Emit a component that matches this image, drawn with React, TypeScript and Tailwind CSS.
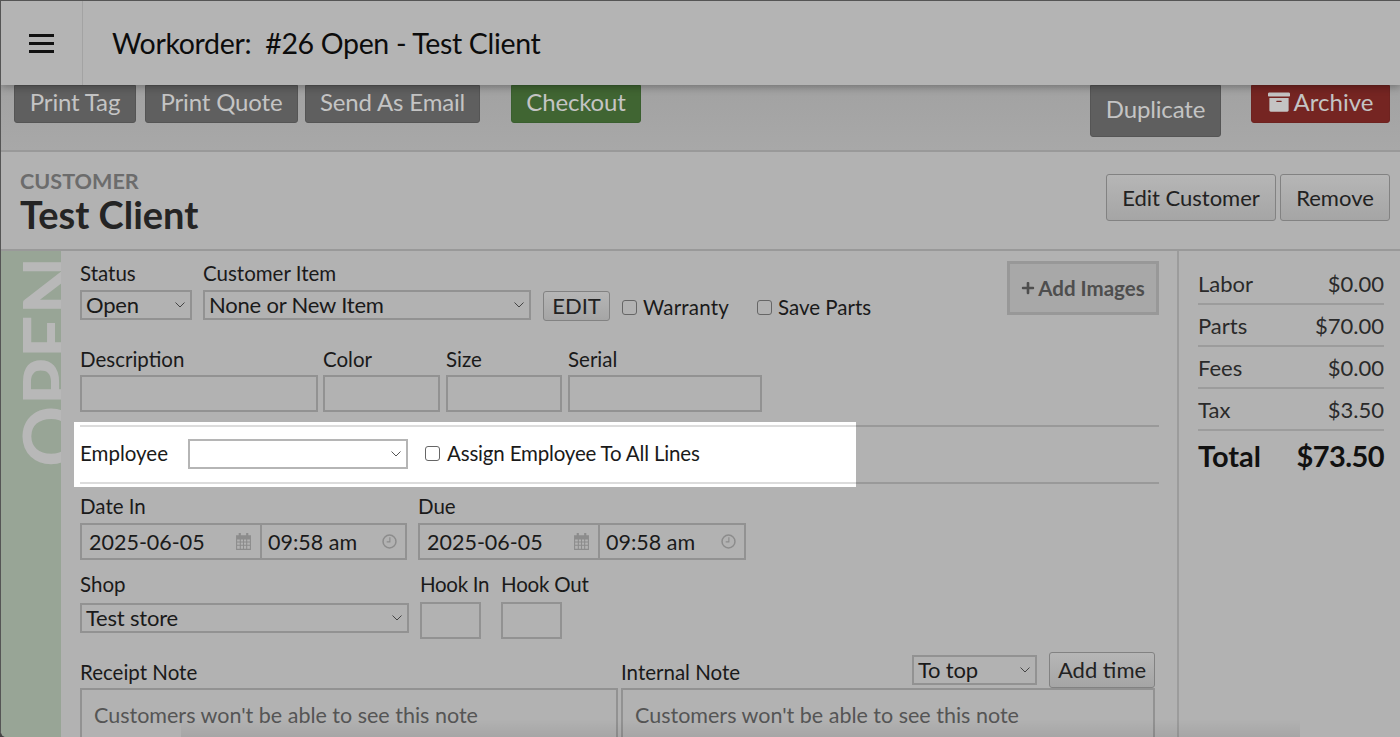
import { FaArchive, FaPlus } from "react-icons/fa";
import type { ReactNode } from "react";

function Chevron({ className }: { className: string }) {
  return (
    <svg viewBox="0 0 10 6" className={`h-[6px] w-[10px] ${className}`} fill="none" stroke="currentColor" strokeWidth="1">
      <path d="M.5.5 5 5 9.5.5" />
    </svg>
  );
}

function Sel({ value, className, white }: { value?: string; className: string; white?: boolean }) {
  return (
    <div
      className={`flex items-center justify-between border-2 pl-[4px] pr-[5px] text-[22px] leading-none tracking-[-0.2px] text-[#1a1a1a] ${
        white ? "border-[#b5b5b5] bg-white" : "border-[#929292]"
      } ${className}`}
    >
      <span>{value}</span>
      <Chevron className={white ? "text-[#555]" : "text-[#444]"} />
    </div>
  );
}

function DarkBtn({ children, className }: { children: ReactNode; className: string }) {
  return (
    <div
      className={`flex items-end justify-center rounded-b-[3px] border text-[24px] leading-none tracking-[-0.15px] text-[#c4c4c4] ${className}`}
    >
      {children}
    </div>
  );
}

function LightBtn({ children, className }: { children: ReactNode; className: string }) {
  return (
    <div
      className={`flex items-center justify-center rounded-[3px] border border-[#828282] bg-gradient-to-b from-[#b6b6b6] to-[#a5a5a5] text-[#222] ${className}`}
    >
      {children}
    </div>
  );
}

function Field({ className }: { className: string }) {
  return <div className={`border-2 border-[#929292] ${className}`} />;
}

function CalendarIcon() {
  return (
    <svg viewBox="0 0 16 16" className="h-[17px] w-[17px] text-[#8c8c8c]" fill="currentColor">
      <rect x="3.5" y="0" width="2" height="3.5" />
      <rect x="10.5" y="0" width="2" height="3.5" />
      <path d="M1 2h14v14H1zM2 6v2h2.5V6zm3.5 0v2h2V6zm3 0v2h2V6zm3 0v2H14V6zM2 9v2h2.5V9zm3.5 0v2h2V9zm3 0v2h2V9zm3 0v2H14V9zM2 12v2.9h2.5V12zm3.5 0v2.9h2V12zm3 0v2.9h2V12zm3 0v2.9H14V12z" fillRule="evenodd" />
    </svg>
  );
}

function ClockIcon() {
  return (
    <svg viewBox="0 0 16 16" className="h-[15px] w-[15px] text-[#8c8c8c]" fill="none" stroke="currentColor" strokeWidth="1.6">
      <circle cx="8" cy="8" r="6.9" />
      <path d="M8.4 3.5V8.4H5" strokeWidth="1.2" />
    </svg>
  );
}

function DateTime({ className }: { className: string }) {
  return (
    <div className={`flex h-[37px] border-2 border-[#929292] text-[21.5px] text-[#1a1a1a] ${className}`}>
      <div className="flex w-[180px] items-center justify-between border-r-2 border-[#929292] pl-[7px] pr-[8px]">
        <span className="pt-[2px]">2025-06-05</span>
        <CalendarIcon />
      </div>
      <div className="flex flex-1 items-center justify-between pl-[6px] pr-[8px]">
        <span className="pt-[2px]">09:58 am</span>
        <ClockIcon />
      </div>
    </div>
  );
}

function Check({ className }: { className?: string }) {
  return <div className={`h-[15px] w-[15px] rounded-[3px] border border-[#666] ${className ?? ""}`} />;
}

function SummaryRow({ label, value }: { label: string; value: string }) {
  return (
    <div className="flex h-[42px] items-center justify-between border-b-2 border-[#9c9c9c] pt-[2px] text-[22px] text-[#2a2a2a]">
      <span>{label}</span>
      <span>{value}</span>
    </div>
  );
}

export default function App() {
  return (
    <div className="h-[737px] w-[1400px] bg-[#444]">
      <div className="relative flex h-full w-full flex-col overflow-hidden rounded-bl-[6px] border-l border-t border-[#555] bg-[#b2b2b2] font-['Lato','Liberation_Sans',sans-serif] text-[20.5px] leading-none text-[#1a1a1a]">
        {/* top bar */}
        <div className="relative z-10 flex h-[84px] shrink-0 items-center bg-[#b4b4b4] shadow-[0_2px_8px_rgba(0,0,0,0.3)]">
          <div className="flex h-full w-[82px] items-center justify-center border-r border-[#a3a3a3]">
            <div className="flex w-[25px] flex-col gap-[5px]">
              <div className="h-[3px] bg-[#111]" />
              <div className="h-[3px] bg-[#111]" />
              <div className="h-[3px] bg-[#111]" />
            </div>
          </div>
          <div className="pl-[29px] text-[28.5px] tracking-[-0.33px] text-[#0c0c0c]">Workorder:&nbsp; #26 Open - Test Client</div>
        </div>

        {/* action buttons */}
        <div className="flex h-[67px] shrink-0 items-start justify-between border-b-2 border-[#999] bg-gradient-to-b from-[#a2a2a2] to-[#a8a8a8] pl-[13px] pr-[10px]">
          <div className="flex">
            <DarkBtn className="h-[38px] w-[122px] border-[#555] bg-[#5f5f5f] pb-[8px]">Print Tag</DarkBtn>
            <DarkBtn className="ml-[9px] h-[38px] w-[153px] border-[#555] bg-[#5f5f5f] pb-[8px]">Print Quote</DarkBtn>
            <DarkBtn className="ml-[7px] h-[38px] w-[175px] border-[#555] bg-[#5f5f5f] pb-[8px]">Send As Email</DarkBtn>
            <DarkBtn className="ml-[31px] h-[38px] w-[130px] border-[#3a5f2f] bg-[#406532] pb-[8px]">Checkout</DarkBtn>
          </div>
          <div className="flex">
            <DarkBtn className="h-[52px] w-[131px] border-[#555] bg-[#5f5f5f] pb-[15px]">Duplicate</DarkBtn>
            <DarkBtn className="ml-[30px] h-[38px] w-[139px] gap-[4px] border-[#6e2320] bg-[#752522] pb-[8px] tracking-normal">
              <FaArchive className="mb-[1px] h-[22px] w-[22px]" />
              Archive
            </DarkBtn>
          </div>
        </div>

        {/* customer */}
        <div className="flex h-[99px] shrink-0 items-center justify-between border-b-2 border-[#999] pl-[19px] pr-[10px]">
          <div className="pt-[3px]">
            <div className="text-[21.6px] font-bold text-[#6c6c6c]">CUSTOMER</div>
            <div className="mt-[3px] text-[38px] font-bold text-[#242424]">Test Client</div>
          </div>
          <div className="flex gap-[4px] pb-[6px] text-[22px]">
            <LightBtn className="h-[47px] w-[170px]">Edit Customer</LightBtn>
            <LightBtn className="h-[47px] w-[110px]">Remove</LightBtn>
          </div>
        </div>

        <div className="flex min-h-0 flex-1">
          {/* status strip */}
          <div className="relative w-[60px] shrink-0 overflow-hidden bg-[#98a596]">
            <span className="absolute left-[11px] top-[216px] origin-top-left -rotate-90 whitespace-nowrap text-[76px] font-bold leading-none text-[#b8b8b8]">
              OPEN
            </span>
          </div>

          {/* form */}
          <div className="w-[1118px] shrink-0 border-r-2 border-[#9c9c9c] pl-[19px] pr-[18px]">
            <div className="flex h-[171px] flex-col">
              <div className="flex justify-between pt-[10px]">
                <div className="flex">
                  <div className="pt-[2px]">
                    <div className="h-[20px]">Status</div>
                    <Sel value="Open" className="mt-[7px] h-[30px] w-[112px]" />
                  </div>
                  <div className="ml-[11px] pt-[2px]">
                    <div className="h-[20px]">Customer Item</div>
                    <Sel value="None or New Item" className="mt-[7px] h-[30px] w-[328px]" />
                  </div>
                  <LightBtn className="ml-[12px] mt-[30px] h-[30px] w-[67px] text-[22px]">EDIT</LightBtn>
                  <div className="ml-[12px] mt-[30px] flex h-[32px] items-center">
                    <Check />
                    <span className="ml-[6px] tracking-[0.2px]">Warranty</span>
                    <Check className="ml-[28px]" />
                    <span className="ml-[6px]">Save Parts</span>
                  </div>
                </div>
                <div className="flex h-[54px] w-[152px] items-center justify-center gap-[3px] border-[3px] border-[#989898] bg-[#a8a8a8] text-[20.5px] font-bold text-[#4e4e4e]">
                  <FaPlus className="h-[14px] w-[14px]" />
                  Add Images
                </div>
              </div>
              <div className="mt-[26px] flex">
                <div>
                  <div className="h-[20px]">Description</div>
                  <Field className="mt-[6px] h-[37px] w-[238px]" />
                </div>
                <div className="ml-[5px]">
                  <div className="h-[20px]">Color</div>
                  <Field className="mt-[6px] h-[37px] w-[117px]" />
                </div>
                <div className="ml-[6px]">
                  <div className="h-[20px]">Size</div>
                  <Field className="mt-[6px] h-[37px] w-[116px]" />
                </div>
                <div className="ml-[6px]">
                  <div className="h-[20px]">Serial</div>
                  <Field className="mt-[6px] h-[37px] w-[194px]" />
                </div>
              </div>
            </div>

            {/* highlighted employee row */}
            <div className="-ml-[6px] flex h-[65px]">
              <div className="w-[782px] bg-white py-[3px] pl-[6px]">
                <div className="flex h-[59px] items-center border-y-2 border-[#dcdcdc] pb-[2px]">
                  <span className="w-[108px]">Employee</span>
                  <Sel white className="h-[30px] w-[220px]" />
                  <Check className="ml-[17px]" />
                  <span className="ml-[7px] tracking-[-0.18px]">Assign Employee To All Lines</span>
                </div>
              </div>
              <div className="my-[3px] flex-1 border-y-2 border-[#999]" />
            </div>

            <div className="mt-[9px] flex gap-[11px]">
              <div>
                <div className="h-[20px]">Date In</div>
                <DateTime className="mt-[7px] w-[327px]" />
              </div>
              <div>
                <div className="h-[20px]">Due</div>
                <DateTime className="mt-[7px] w-[328px]" />
              </div>
            </div>

            <div className="mt-[14px] flex">
              <div>
                <div className="h-[20px]">Shop</div>
                <Sel value="Test store" className="mt-[9px] h-[30px] w-[329px]" />
              </div>
              <div className="ml-[11px] w-[61px]">
                <div className="h-[20px] whitespace-nowrap tracking-[-0.3px]">Hook In</div>
                <Field className="mt-[8px] h-[37px] w-[61px]" />
              </div>
              <div className="ml-[20px] w-[61px]">
                <div className="h-[20px] whitespace-nowrap tracking-[-0.2px]">Hook Out</div>
                <Field className="mt-[8px] h-[37px] w-[61px]" />
              </div>
            </div>

            <div className="mt-[13px] flex">
              <div className="w-[538px]">
                <div className="mt-[10px] h-[20px]">Receipt Note</div>
                <div className="mt-[6px] h-[70px] border-2 border-[#929292] pl-[12px] pt-[15px] text-[21.5px] text-[#555]">
                  Customers won't be able to see this note
                </div>
              </div>
              <div className="ml-[3px] w-[534px]">
                <div className="flex h-[36px] items-center">
                  <div className="mt-[3px] h-[20px] flex-1">Internal Note</div>
                  <Sel value="To top" className="h-[30px] w-[125px]" />
                  <LightBtn className="ml-[12px] h-[36px] w-[106px] text-[22px]">Add time</LightBtn>
                </div>
                <div className="h-[70px] border-2 border-[#929292] pl-[12px] pt-[15px] text-[21.5px] text-[#555]">
                  Customers won't be able to see this note
                </div>
              </div>
            </div>
          </div>

          {/* totals */}
          <div className="flex-1 pl-[19px] pr-[16px] pt-[12px]">
            <SummaryRow label="Labor" value="$0.00" />
            <SummaryRow label="Parts" value="$70.00" />
            <SummaryRow label="Fees" value="$0.00" />
            <SummaryRow label="Tax" value="$3.50" />
            <div className="mt-[10px] flex items-center justify-between text-[29px] font-bold text-[#111]">
              <span>Total</span>
              <span className="tracking-[-0.6px]">$73.50</span>
            </div>
          </div>
        </div>

        {/* faint shadow along the bottom edge */}
        <div className="pointer-events-none absolute bottom-0 left-[180px] right-[100px] h-[18px] bg-gradient-to-b from-transparent to-[rgba(0,0,0,0.07)]" />
      </div>
    </div>
  );
}
